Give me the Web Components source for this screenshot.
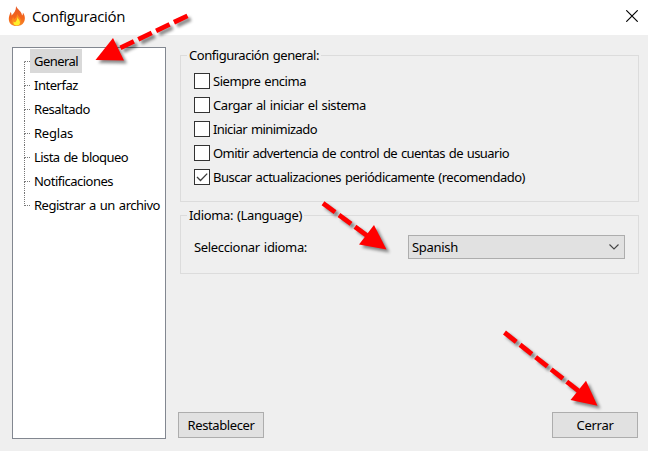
<!DOCTYPE html>
<html lang="es">
<head>
<meta charset="utf-8">
<title>Configuración</title>
<style>
html,body{margin:0;width:648px;height:451px;overflow:hidden;background:#efefef}
</style>
</head>
<body>
<settings-window></settings-window>
<script>
const define = (name, html, setup) => {
  const template = document.createElement('template');
  template.innerHTML = html;
  customElements.define(name, class extends HTMLElement {
    connectedCallback() {
      if (this.shadowRoot) return;
      this.attachShadow({mode: 'open'}).append(template.content.cloneNode(true));
      if (setup) setup(this, this.shadowRoot);
    }
  });
};

/* A one-line label whose tracking is adjusted to a given advance width. */
define('fit-text', `<style>
:host{display:inline-block;white-space:nowrap;line-height:16px;word-spacing:1px}
span{display:inline-block}
</style><span><slot></slot></span>`, (host, root) => {
  const width = Number(host.getAttribute('w'));
  const span = root.querySelector('span');
  const count = host.textContent.length;
  span.style.letterSpacing = ((width - span.getBoundingClientRect().width) / count) + 'px';
});

define('title-bar', `<style>
:host{display:flex;align-items:center;height:35px;background:#fff;box-sizing:border-box;padding:0 10px 0 8px;font:15px "Open Sans","Noto Sans",sans-serif;color:#000}
.flame{flex:none;margin-top:-3px}
fit-text{margin:-4px auto 0 7px;line-height:20px}
.close{margin-top:-3px}
</style>
<svg class="flame" width="17" height="20" viewBox="0 0 17 20">
<defs><linearGradient id="a" x2="0" y2="1"><stop offset="0" stop-color="#e65a28"/><stop offset=".6" stop-color="#f4661b"/><stop offset="1" stop-color="#f58a2c"/></linearGradient></defs>
<path fill="url(#a)" d="M8 0C9 3 14 5.500 14 9.500C14.800 9 15 8 14.800 6.500C17 9 17.500 13 16 16C14.500 19 11.500 20 8.500 20C4 20 .8 17.400 .8 13C.8 10 2 8 2.600 6C3.400 7 3.500 8 3.600 9.500C6.500 7 8.300 4 8 0Z"/>
<path fill="#fc8a1e" d="M9 7.500C9.500 10 13 11.500 13 15C13 18 11.500 19.500 8.500 19.500C5 19.500 3.500 17.500 3.800 15C4 13 4.700 12.500 5 11C5.600 11.500 5.800 12.500 6 13.500C8 12 9.200 10 9 7.500Z"/>
<path fill="#fff12b" d="M9.300 11C9.800 13 12 14 12 16.500C12 18.500 10.800 19.500 8.800 19.500C6.400 19.500 5 18 5.500 15.500C6 15.800 6.500 16.200 7 16.500C8.500 15 9.500 13 9.300 11Z"/>
</svg>
<fit-text w="93">Configuración</fit-text>
<svg class="close" width="12" height="12" viewBox="0 0 12 12"><path d="M.3.300L11.700 11.700M11.700.300L.3 11.700" stroke="#000" stroke-width="1.150"/></svg>`);

define('tree-view', `<style>
:host{display:flex;flex-direction:column;box-sizing:border-box;width:154px;height:392px;background:#fff;border:1px solid #828790;padding:1px 0 0 11px}
</style><slot></slot>`);

define('tree-item', `<style>
:host{display:grid;grid-template-columns:6px auto;justify-content:start;align-items:stretch;height:24px;flex:none}
.line{display:grid;grid-template-rows:13px 11px}
.line i{border-left:1px dotted #777}
.line i:first-child{border-bottom:1px dotted #777}
:host([first]) .line i:first-child{border-left-color:transparent}
:host([last]) .line i:last-child{border:0}
.label{padding:3px 4px 0}
:host([selected]) .label{background:#d9d9d9}
</style><div class="line"><i></i><i></i></div><div class="label"><slot></slot></div>`);

define('group-box', `<style>
:host{display:block}
fieldset{margin:0;border:1px solid #dcdcdc;padding:0 13px;box-sizing:border-box;height:100%;min-width:0}
legend{margin-left:-7px;padding:0 2px;height:16px;line-height:16px}
</style><fieldset><legend><slot name="legend"></slot></legend><slot></slot></fieldset>`);

define('check-box', `<style>
:host{display:flex;align-items:center;height:24px}
.box{box-sizing:border-box;width:16px;height:16px;border:1px solid #333;background:#fff;margin-right:3px}
svg{display:none}
:host([checked]) svg{display:block}
</style><div class="box"><svg width="14" height="14" viewBox="0 0 14 14"><path d="M2 7L5.500 10.500L12.200 3.600" fill="none" stroke="#3c3c3c" stroke-width="1.300"/></svg></div><slot></slot>`);

define('combo-box', `<style>
:host{display:flex;box-sizing:border-box;align-items:center;justify-content:space-between;width:217px;height:24px;border:1px solid #adadad;background:#e1e1e1;padding:0 5px 0 3px}
</style><slot></slot><svg width="10" height="6" viewBox="0 0 10 6"><path d="M.5.500L5 5L9.500.500" fill="none" stroke="#444" stroke-width="1.100"/></svg>`);

define('push-button', `<style>
:host{display:flex;box-sizing:border-box;align-items:center;justify-content:center;width:86px;height:26px;border:1px solid #adadad;background:#e1e1e1}
</style><slot></slot>`);

/* Dashed pointers with a soft shadow, drawn over the window. */
define('pointer-arrows', `<style>
:host{position:absolute;inset:0;pointer-events:none}
svg{display:block;filter:drop-shadow(3px 3px 1.500px rgba(0,0,0,.45))}
line{stroke:#f00;stroke-width:4.800;stroke-dasharray:15 4.800}
polygon{fill:#f00}
</style><svg width="648" height="451">
<line x1="187.500" y1="15.800" x2="117" y2="49.500"/><polygon points="95.500,60 113,38 124,60.500"/>
<line x1="323" y1="203.300" x2="369" y2="237"/><polygon points="386.500,249.500 374,225 359,244.500"/>
<line x1="504.500" y1="332.500" x2="580" y2="392"/><polygon points="597.500,405.700 586,380.700 570.500,400"/>
</svg>`);

define('settings-window', `<style>
:host{display:block;position:relative;width:648px;height:451px;background:#efefef;color:#000;font:13px "Noto Sans","DejaVu Sans Condensed",sans-serif}
main{display:grid;grid-template-columns:154px 461px;gap:12px;padding:12px 9px 0 12px}
.right{display:flex;flex-direction:column;height:391px}
group-box{margin-left:2px;width:459px}
.general{height:155px}
.language{height:67px;margin-top:5px}
.checks{padding-top:6px}
.row{display:flex;align-items:center;justify-content:space-between;margin-top:12px}
.buttons{display:flex;justify-content:space-between;width:460px;margin-top:auto}
</style>
<title-bar></title-bar>
<main>
<tree-view>
<tree-item first selected><fit-text w="44">General</fit-text></tree-item>
<tree-item><fit-text w="44">Interfaz</fit-text></tree-item>
<tree-item><fit-text w="56">Resaltado</fit-text></tree-item>
<tree-item><fit-text w="39">Reglas</fit-text></tree-item>
<tree-item><fit-text w="94">Lista de bloqueo</fit-text></tree-item>
<tree-item><fit-text w="79">Notificaciones</fit-text></tree-item>
<tree-item last><fit-text w="126">Registrar a un archivo</fit-text></tree-item>
</tree-view>
<div class="right">
<group-box class="general"><fit-text slot="legend" w="130">Configuración general:</fit-text>
<div class="checks">
<check-box><fit-text w="93">Siempre encima</fit-text></check-box>
<check-box><fit-text w="153">Cargar al iniciar el sistema</fit-text></check-box>
<check-box><fit-text w="104">Iniciar minimizado</fit-text></check-box>
<check-box><fit-text w="296">Omitir advertencia de control de cuentas de usuario</fit-text></check-box>
<check-box checked><fit-text w="312">Buscar actualizaciones periódicamente (recomendado)</fit-text></check-box>
</div></group-box>
<group-box class="language"><fit-text slot="legend" w="113">Idioma: (Language)</fit-text>
<div class="row"><fit-text w="113">Seleccionar idioma:</fit-text><combo-box><fit-text w="46">Spanish</fit-text></combo-box></div></group-box>
<div class="buttons"><push-button><fit-text w="67">Restablecer</fit-text></push-button><push-button><fit-text w="37">Cerrar</fit-text></push-button></div>
</div>
</main>
<pointer-arrows></pointer-arrows>`);
</script>
</body>
</html>
